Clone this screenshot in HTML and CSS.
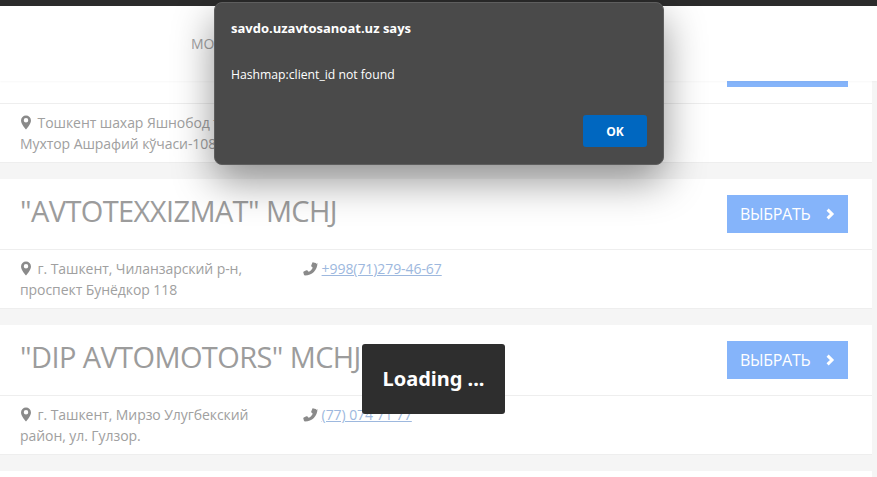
FILE: index.html
```html
<!DOCTYPE html>
<html lang="ru">
<head>
    <meta charset="UTF-8">
    <meta name="viewport" content="width=device-width, initial-scale=1.0">
    <title>Дилеры</title>
    <link rel="stylesheet" href="styles.css">
</head>
<body>

    <div class="top-bar"></div>

    <header class="site-header">
        <nav class="main-nav">
            <a href="#">МОДЕЛИ</a>
        </nav>
    </header>

    <!-- Dealer list, scrolled so that the first card sits under the header -->
    <main class="dealer-list">
        <section class="dealer-card">
            <div class="dealer-head">
                <h2>"UZAUTO SERVIS" MCHJ</h2>
                <a class="select-btn" href="#">ВЫБРАТЬ
                    <svg class="chevron" viewBox="0 0 10 12"><path d="M2.6 1.6 7 6l-4.400 4.400"/></svg>
                </a>
            </div>
            <div class="dealer-info">
                <p class="address">
                    <svg class="pin" viewBox="0 0 12 16"><path fill-rule="evenodd" d="M6 .5A5.3 5.3 0 0 0 .7 5.8C.7 9 4.300 13.500 6 15.500 7.700 13.500 11.300 9 11.300 5.800A5.300 5.300 0 0 0 6 .5Zm0 7.600a2.400 2.400 0 1 1 0-4.800 2.400 2.400 0 0 1 0 4.800Z"/></svg>
                    Тошкент шахар Яшнобод тумани, Мухтор Ашрафий кўчаси-108
                </p>
                <p class="phone">
                    <svg class="handset" viewBox="0 0 14 14"><path d="M13.500 1.800c0 6.600-5.100 11.700-11.600 11.700-.5 0-.8-.2-1-.6L.3 10.700c-.1-.4 0-.8.4-1l2.500-1c.3-.2.700-.1 1 .2l1 1.200c1.700-.8 3.100-2.200 3.900-3.900L7.900 5.200c-.3-.3-.4-.7-.2-1l1-2.500c.2-.4.600-.5 1-.4l2.200.5c.4.100.6.500.6 1Z"/></svg>
                    <a href="#">+998(71)515-66-77</a>
                </p>
            </div>
        </section>

        <section class="dealer-card">
            <div class="dealer-head">
                <h2>"AVTOTEXXIZMAT" MCHJ</h2>
                <a class="select-btn" href="#">ВЫБРАТЬ
                    <svg class="chevron" viewBox="0 0 10 12"><path d="M2.6 1.6 7 6l-4.400 4.400"/></svg>
                </a>
            </div>
            <div class="dealer-info">
                <p class="address">
                    <svg class="pin" viewBox="0 0 12 16"><path fill-rule="evenodd" d="M6 .5A5.3 5.3 0 0 0 .7 5.8C.7 9 4.300 13.500 6 15.500 7.700 13.500 11.300 9 11.300 5.800A5.300 5.300 0 0 0 6 .5Zm0 7.600a2.400 2.400 0 1 1 0-4.800 2.400 2.400 0 0 1 0 4.800Z"/></svg>
                    г. Ташкент, Чиланзарский р-н, проспект Бунёдкор 118
                </p>
                <p class="phone">
                    <svg class="handset" viewBox="0 0 14 14"><path d="M13.500 1.800c0 6.600-5.100 11.700-11.600 11.700-.5 0-.8-.2-1-.6L.3 10.700c-.1-.4 0-.8.4-1l2.500-1c.3-.2.700-.1 1 .2l1 1.200c1.700-.8 3.100-2.200 3.900-3.900L7.900 5.200c-.3-.3-.4-.7-.2-1l1-2.500c.2-.4.600-.5 1-.4l2.200.5c.4.100.6.500.6 1Z"/></svg>
                    <a href="#">+998(71)279-46-67</a>
                </p>
            </div>
        </section>

        <section class="dealer-card">
            <div class="dealer-head">
                <h2>"DIP AVTOMOTORS" MCHJ</h2>
                <a class="select-btn" href="#">ВЫБРАТЬ
                    <svg class="chevron" viewBox="0 0 10 12"><path d="M2.6 1.6 7 6l-4.400 4.400"/></svg>
                </a>
            </div>
            <div class="dealer-info">
                <p class="address">
                    <svg class="pin" viewBox="0 0 12 16"><path fill-rule="evenodd" d="M6 .5A5.3 5.3 0 0 0 .7 5.8C.7 9 4.300 13.500 6 15.500 7.700 13.500 11.300 9 11.300 5.800A5.300 5.300 0 0 0 6 .5Zm0 7.600a2.400 2.400 0 1 1 0-4.800 2.400 2.400 0 0 1 0 4.800Z"/></svg>
                    г. Ташкент, Мирзо Улугбекский район, ул. Гулзор.
                </p>
                <p class="phone">
                    <svg class="handset" viewBox="0 0 14 14"><path d="M13.500 1.800c0 6.600-5.100 11.700-11.600 11.700-.5 0-.8-.2-1-.6L.3 10.700c-.1-.4 0-.8.4-1l2.500-1c.3-.2.700-.1 1 .2l1 1.200c1.700-.8 3.100-2.200 3.900-3.900L7.900 5.200c-.3-.3-.4-.7-.2-1l1-2.500c.2-.4.600-.5 1-.4l2.200.5c.4.100.6.500.6 1Z"/></svg>
                    <a href="#">(77) 074 71 77</a>
                </p>
            </div>
        </section>

        <section class="dealer-card dealer-card-next"></section>
    </main>

    <!-- Loading toast -->
    <div class="loading-box">Loading ...</div>

    <!-- Browser alert -->
    <div class="alert-box">
        <h3>savdo.uzavtosanoat.uz says</h3>
        <p>Hashmap:client_id not found</p>
        <div class="alert-actions">
            <button class="alert-ok">OK</button>
        </div>
    </div>

</body>
</html>
```

FILE: styles.css
```css
/* Reset margin and padding */
* {
    margin: 0;
    padding: 0;
    box-sizing: border-box;
}

html, body {
    height: 100%;
    overflow: hidden;
}

body {
    background-color: #f5f5f5;
    font-family: 'Open Sans', 'Noto Sans', sans-serif;
    color: #8c8c8c;
    position: relative;
}

.top-bar {
    height: 6px;
    background-color: #2b2b2b;
}

/* Header stays over the scrolled list */
.site-header {
    position: relative;
    z-index: 1;
    height: 75px;
    background-color: #fff;
    box-shadow: 0 1px 2px rgba(0, 0, 0, 0.03);
}

.main-nav {
    padding: 28px 0 0 191px;
    font-size: 14px;
    line-height: 20px;
}

.main-nav a {
    color: #a3a3a3;
    text-decoration: none;
}

.dealer-list {
    margin-top: -48px;
    padding-right: 5px;
}

.dealer-card {
    background-color: #fff;
    margin-bottom: 16px;
    border-bottom: 1px solid #eee;
}

.dealer-card-next {
    height: 6px;
    margin-bottom: 0;
    border-bottom: none;
}

.dealer-head {
    height: 71px;
    padding: 16px 24px 0 20px;
    display: flex;
    justify-content: space-between;
    align-items: flex-start;
    border-bottom: 1px solid #eee;
}

.dealer-head h2 {
    margin-top: -2px;
    font-size: 29px;
    font-weight: 400;
    line-height: 36px;
    letter-spacing: -0.6px;
    color: #9c9c9c;
}

.select-btn {
    width: 121px;
    height: 38px;
    padding-left: 13px;
    padding-bottom: 1px;
    display: flex;
    align-items: center;
    gap: 15px;
    background-color: #85b4fa;
    color: #fff;
    font-size: 16px;
    letter-spacing: -0.3px;
    text-decoration: none;
}

.chevron {
    width: 10px;
    height: 12px;
    fill: none;
    stroke: #fff;
    stroke-width: 3;
}

.dealer-info {
    height: 58px;
    padding: 8px 0 0 20px;
    display: flex;
    font-size: 14px;
    line-height: 21px;
    letter-spacing: -0.07px;
    color: #a0a0a0;
}

.address {
    width: 283px;
    padding-right: 30px;
}

.pin {
    width: 12px;
    height: 15px;
    fill: #8a8a8a;
    vertical-align: -2px;
    margin-right: 2px;
}

.handset {
    width: 15px;
    height: 15px;
    fill: #8a8a8a;
    vertical-align: -2px;
}

.phone a {
    color: #9db8de;
}

.loading-box {
    position: absolute;
    left: 362px;
    top: 344px;
    width: 143px;
    height: 70px;
    padding-bottom: 2px;
    display: flex;
    align-items: center;
    justify-content: center;
    background-color: #2e2e2e;
    border-radius: 3px;
    color: #fff;
    font-family: 'Noto Sans', sans-serif;
    font-size: 20px;
    font-weight: 700;
}

/* Alert dialog on top of everything */
.alert-box {
    position: absolute;
    z-index: 2;
    left: 214px;
    top: 2px;
    width: 450px;
    height: 163px;
    padding: 16px 16px 17px 16px;
    background-color: #4a4a4a;
    border: 1px solid #5e5e5e;
    border-radius: 8px;
    box-shadow: 0 16px 40px rgba(0, 0, 0, 0.42);
    color: #fff;
    font-family: 'Open Sans', 'Noto Sans', sans-serif;
    display: flex;
    flex-direction: column;
}

.alert-box h3 {
    font-size: 13px;
    font-weight: 700;
    line-height: 18px;
}

.alert-box p {
    margin-top: 29px;
    font-size: 12.200px;
    line-height: 18px;
}

.alert-actions {
    margin-top: auto;
    display: flex;
    justify-content: flex-end;
}

.alert-ok {
    width: 64px;
    height: 32px;
    background-color: #0067c0;
    border: none;
    border-radius: 3px;
    color: #fff;
    font-family: 'Open Sans', 'Noto Sans', sans-serif;
    font-size: 12px;
    font-weight: 700;
}
```
